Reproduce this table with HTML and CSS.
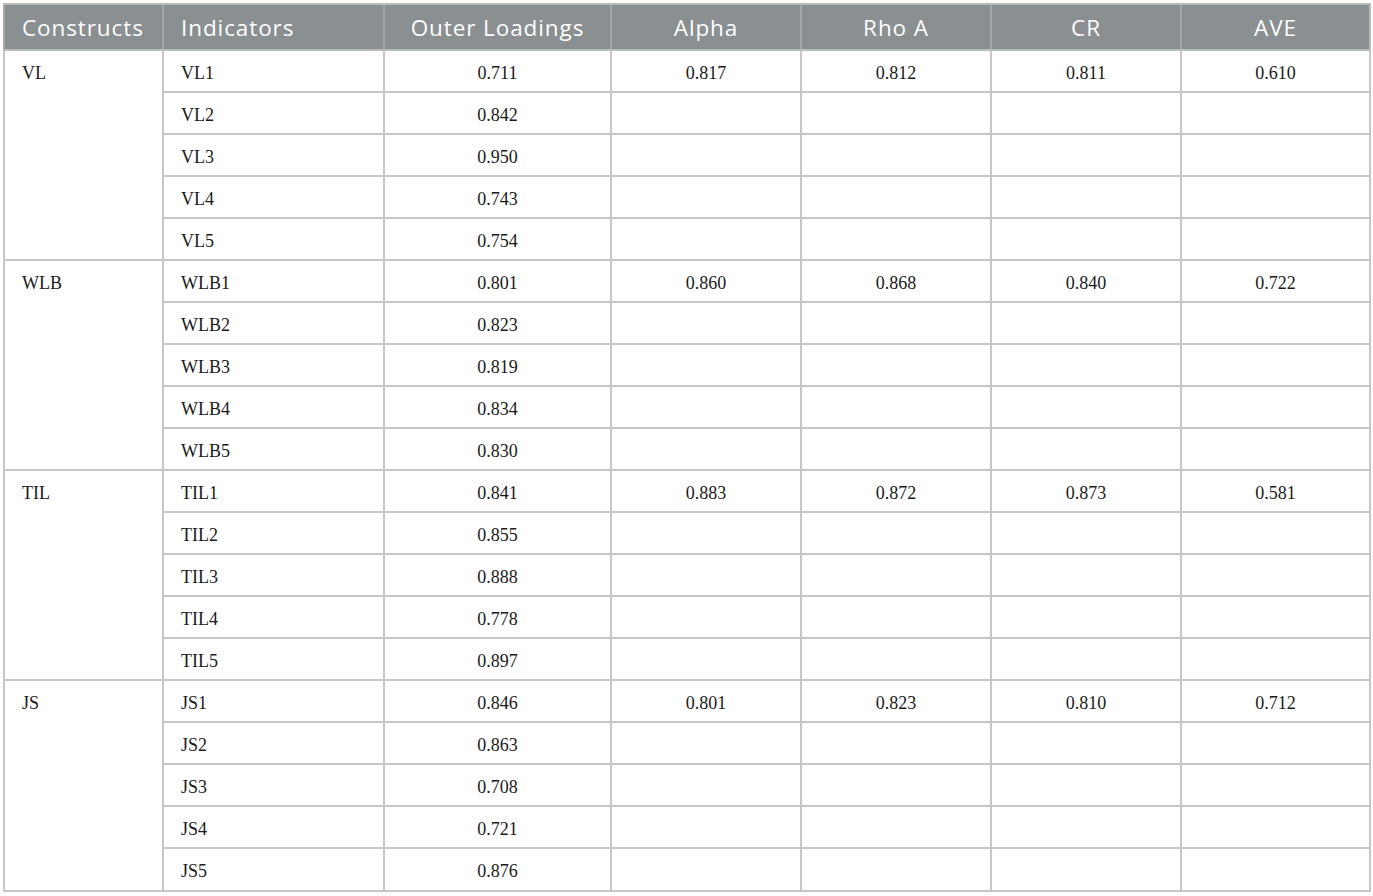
FILE: index.html
```html
<!DOCTYPE html>
<html>
<head>
<meta charset="utf-8">
<link rel="stylesheet" href="styles.css">
</head>
<body>
<table class="data">
<colgroup>
<col class="c1"><col class="c2"><col class="c3"><col class="c4"><col class="c5"><col class="c6"><col class="c7">
</colgroup>
<thead>
<tr><th class="left">Constructs</th><th class="left">Indicators</th><th>Outer Loadings</th><th>Alpha</th><th>Rho A</th><th>CR</th><th>AVE</th></tr>
</thead>
<tbody>
<tr><td class="left con" rowspan="5">VL</td><td class="left">VL1</td><td>0.711</td><td>0.817</td><td>0.812</td><td>0.811</td><td>0.610</td></tr>
<tr><td class="left">VL2</td><td>0.842</td><td></td><td></td><td></td><td></td></tr>
<tr><td class="left">VL3</td><td>0.950</td><td></td><td></td><td></td><td></td></tr>
<tr><td class="left">VL4</td><td>0.743</td><td></td><td></td><td></td><td></td></tr>
<tr><td class="left">VL5</td><td>0.754</td><td></td><td></td><td></td><td></td></tr>
<tr><td class="left con" rowspan="5">WLB</td><td class="left">WLB1</td><td>0.801</td><td>0.860</td><td>0.868</td><td>0.840</td><td>0.722</td></tr>
<tr><td class="left">WLB2</td><td>0.823</td><td></td><td></td><td></td><td></td></tr>
<tr><td class="left">WLB3</td><td>0.819</td><td></td><td></td><td></td><td></td></tr>
<tr><td class="left">WLB4</td><td>0.834</td><td></td><td></td><td></td><td></td></tr>
<tr><td class="left">WLB5</td><td>0.830</td><td></td><td></td><td></td><td></td></tr>
<tr><td class="left con" rowspan="5">TIL</td><td class="left">TIL1</td><td>0.841</td><td>0.883</td><td>0.872</td><td>0.873</td><td>0.581</td></tr>
<tr><td class="left">TIL2</td><td>0.855</td><td></td><td></td><td></td><td></td></tr>
<tr><td class="left">TIL3</td><td>0.888</td><td></td><td></td><td></td><td></td></tr>
<tr><td class="left">TIL4</td><td>0.778</td><td></td><td></td><td></td><td></td></tr>
<tr><td class="left">TIL5</td><td>0.897</td><td></td><td></td><td></td><td></td></tr>
<tr><td class="left con" rowspan="5">JS</td><td class="left">JS1</td><td>0.846</td><td>0.801</td><td>0.823</td><td>0.810</td><td>0.712</td></tr>
<tr><td class="left">JS2</td><td>0.863</td><td></td><td></td><td></td><td></td></tr>
<tr><td class="left">JS3</td><td>0.708</td><td></td><td></td><td></td><td></td></tr>
<tr><td class="left">JS4</td><td>0.721</td><td></td><td></td><td></td><td></td></tr>
<tr><td class="left">JS5</td><td>0.876</td><td></td><td></td><td></td><td></td></tr>
</tbody>
</table>
</body>
</html>
```
FILE: styles.css
```css
html, body {
  margin: 0;
  padding: 0;
  background: #ffffff;
}
body {
  padding: 3px 4px 0 3px;
}
.data {
  border-collapse: collapse;
  table-layout: fixed;
  width: 1366px;
  border: 2px solid #b8bcb9;
}
.c1 { width: 159px; }
.c2 { width: 221px; }
.c3 { width: 227px; }
.c4 { width: 190px; }
.c5 { width: 190px; }
.c6 { width: 190px; }
.c7 { width: 189px; }
.data th {
  background: #8a8f91;
  color: #ffffff;
  font-family: "Open Sans", "Liberation Sans", sans-serif;
  font-weight: 400;
  font-size: 22.5px;
  letter-spacing: 0.9px;
  height: 46px;
  padding: 0 17px;
  text-align: center;
  border-left: 2px solid #a3a7a8;
  border-top: 2px solid #b8bcb9;
  border-bottom: 2px solid #b8bcb9;
  box-sizing: border-box;
  vertical-align: middle;
}
.data td {
  font-family: "Liberation Serif", "Times New Roman", serif;
  font-size: 18px;
  color: #1a1a1a;
  height: 42px;
  padding: 4px 17px 0;
  text-align: center;
  border: 2px solid #c4c7c5;
  box-sizing: border-box;
  vertical-align: middle;
}
.data tbody tr:last-child td {
  height: 43px;
}
.data th.left, .data td.left {
  text-align: left;
}
.data td.con {
  vertical-align: top;
  padding-top: 12px;
}
```
